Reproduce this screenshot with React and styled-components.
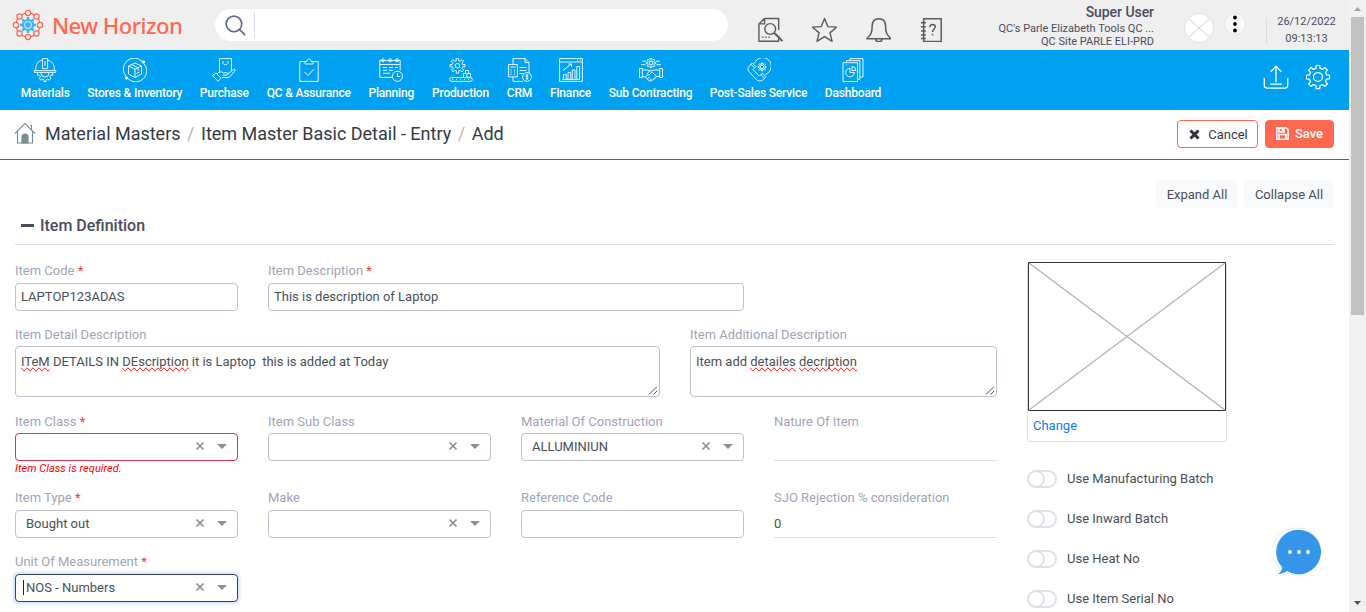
import React from "react";
import styled, { createGlobalStyle, css } from "styled-components";

const Global = createGlobalStyle`
  *, *::before { box-sizing: border-box; }
  html, body { margin: 0; height: 100%; overflow: hidden; background: #fff; }
  body { font-family: Roboto, "Liberation Sans", sans-serif; font-size: 13px; color: #495057; }
  button { font-family: inherit; }
`;

const Shell = styled.div`
  display: flex;
  width: 1366px;
  height: 612px;
  overflow: hidden;
`;
const Page = styled.div`
  width: 1349px;
  height: 612px;
  overflow: hidden;
  white-space: nowrap;
`;

/* Header */
const Header = styled.header`
  display: flex;
  align-items: flex-start;
  height: 50px;
  background: #efefef;
`;
const Brand = styled.div`
  display: flex;
  align-items: center;
  width: 215px;
  height: 50px;
  padding: 0 0 1px 12px;
  gap: 8px;
  color: #ff6850;
  font: 500 22px/30px "Noto Sans", sans-serif;
  letter-spacing: -0.48px;
`;
const SearchBox = styled.div`
  display: flex;
  align-items: center;
  width: 513px;
  height: 32px;
  margin-top: 9px;
  padding-left: 10px;
  border-radius: 16px;
  background: #fff;
`;
const SearchDivider = styled.span`
  width: 1px;
  height: 26px;
  margin-left: 8px;
  background: #dcdce6;
`;
const Shortcuts = styled.div`
  display: flex;
  width: 188px;
  margin: 16px 0 0 29px;
  justify-content: space-between;
`;
const UserInfo = styled.div`
  width: 180px;
  margin-left: 29px;
  padding-top: 4px;
  text-align: right;
  font-size: 11px;
  line-height: 13px;
  color: #4b4c5e;
`;
const UserName = styled.div`
  font-size: 14px;
  line-height: 17px;
  font-weight: 500;
  letter-spacing: -0.05px;
  margin-bottom: 1px;
`;
const Avatar = styled.div`
  width: 30px;
  height: 30px;
  margin: 13px 0 0 30px;
  border: 1px solid #e2e2e2;
  border-radius: 50%;
  background: #fff;
  overflow: hidden;
`;
const Kebab = styled.div`
  display: flex;
  justify-content: center;
  width: 22px;
  height: 22px;
  margin: 13px 0 0 10px;
  border: 1px solid #e4e4e4;
  border-radius: 50%;
  background: #f8f8f8;
`;
const Clock = styled.div`
  width: 80px;
  height: 26px;
  margin: 18px 0 0 20px;
  border-left: 1px solid #dcdce6;
`;
const ClockText = styled.div`
  margin-top: -5px;
  font-size: 11px;
  line-height: 17px;
  text-align: center;
  color: #4b4c5e;
`;

/* Navigation */
const Nav = styled.nav`
  display: flex;
  justify-content: space-between;
  height: 60px;
  padding: 8px 18px 0 12px;
  background: #00a1f1;
  color: #fff;
`;
const NavItems = styled.div`
  display: flex;
`;
const NavItem = styled.div`
  display: flex;
  flex-direction: column;
  align-items: center;
  width: ${(p) => p.$w}px;
  font-size: 12px;
  line-height: 14px;
  font-weight: 500;
  letter-spacing: -0.18px;
  gap: 4px;
`;
const NavTools = styled.div`
  display: flex;
  gap: 17px;
  padding-top: 7px;
`;

/* Breadcrumb */
const Bar = styled.div`
  display: flex;
  align-items: center;
  height: 50px;
  padding: 0 15px 2px 14px;
  border-bottom: 1px solid #5f6062;
`;
const HomeIcon = styled.svg`
  margin-bottom: 2px;
`;
const Crumbs = styled.div`
  display: flex;
  flex: 1;
  margin-left: 9px;
  font-size: 18px;
  letter-spacing: -0.01px;
  color: #343a46;
`;
const Slash = styled.span`
  width: 20.5px;
  text-align: center;
  color: #b6b6bb;
`;
const Button = styled.button`
  display: flex;
  align-items: center;
  justify-content: center;
  gap: ${(p) => (p.$primary ? 6 : 8)}px;
  height: 28px;
  padding: 0;
  margin: 0 0 0 7px;
  border: 1px solid #ff6850;
  border-radius: 4px;
  font-size: 13px;
  width: ${(p) => p.$w}px;
  ${(p) =>
    p.$primary
      ? css`background: #ff6850; color: #fff; font-weight: 500;`
      : css`background: #fff; color: #343a46; padding: 1px 0 0 2px;`}
`;
const PlainButton = styled(Button)`
  border: 0;
  margin: 0;
  padding: 0;
  background: #f8f9fb;
  color: #495057;
`;

/* Content */
const Actions = styled.div`
  display: flex;
  justify-content: flex-end;
  gap: 6px;
  padding: 20px 15px 0 0;
`;
const SectionTitle = styled.h2`
  display: flex;
  align-items: center;
  gap: 6px;
  height: 37px;
  margin: 0 15px 17px;
  padding: 0 0 2px 6px;
  border-bottom: 1px solid #dcdcdc;
  font-size: 16px;
  font-weight: 500;
  color: #4b4c5e;
`;
const Dash = styled.span`
  width: 13px;
  height: 3px;
  background: #4b4c5e;
`;
const Body = styled.div`
  display: flex;
  padding-left: 15px;
  gap: 30px;
`;
const Form = styled.div`
  width: 982px;
`;
const Row = styled.div`
  display: grid;
  grid-template-columns: ${(p) => p.$cols};
  column-gap: 30px;
  height: ${(p) => p.$h}px;
  align-items: start;
`;
const Field = styled.div`
  display: flex;
  flex-direction: column;
  min-width: 0;
`;
const Label = styled.label`
  height: 18px;
  margin-bottom: ${(p) => p.$gap}px;
  line-height: 18px;
  color: #a1a5b7;
`;
const Star = styled.span`
  color: #f33;
`;
const Control = styled.div`
  display: flex;
  align-items: center;
  height: ${(p) => p.$h || 28}px;
  padding-left: ${(p) => (p.$select ? 10 : 5)}px;
  padding-bottom: ${(p) => (p.$area ? 0 : 2)}px;
  border: 1px solid #bfbfd0;
  border-radius: 4px;
  background: #fff;
  ${(p) => p.$state === "error" && css`border-color: #dc3545;`}
  ${(p) => p.$state === "focus" && css`
    border-color: #3b4354;
    padding-left: 7px;
    box-shadow: 0 0 3px 2px #cfe4ff;
  `}
  ${(p) => p.$area && css`align-items: stretch; line-height: 30px; white-space: pre;`}
  ${(p) => p.$readonly && css`
    border: 0;
    border-bottom: 1px solid #dedfe6;
    border-radius: 0;
    padding-left: 0;
    padding-bottom: 0;
  `}
`;
const Value = styled.span`
  flex: 1;
`;
const Caret = styled.span`
  width: 1px;
  height: 15px;
  margin-right: 2px;
  background: #222;
`;
const SelectIcons = styled.svg`
  margin-right: 8px;
`;
const Grip = styled.svg`
  align-self: flex-end;
`;
const Misspelt = styled.span`
  text-decoration-line: spelling-error;
`;
const ErrorText = styled.div`
  height: 15px;
  font-size: 11px;
  line-height: 15px;
  font-style: italic;
  letter-spacing: 0.04px;
  color: #f00;
`;
const Side = styled.aside`
  width: 200px;
`;
const ImageCard = styled.div`
  height: 180px;
  border: 1px solid #dfdfe3;
  border-top: 0;
  border-radius: 4px;
`;
const Placeholder = styled.svg`
  display: block;
`;
const Change = styled.a`
  display: block;
  padding: 6px 0 0 5px;
  line-height: 18px;
  color: #0d7bff;
`;
const Toggles = styled.div`
  display: flex;
  flex-direction: column;
  gap: 22px;
  margin-top: 28px;
`;
const ToggleRow = styled.div`
  display: flex;
  align-items: flex-start;
  gap: 10px;
  height: 18px;
  line-height: 18px;
`;
const Toggle = styled.span`
  width: 30px;
  height: 18px;
  border: 2px solid #e0e0e8;
  border-radius: 9px;
  &::before {
    content: "";
    display: block;
    width: 18px;
    height: 18px;
    margin: -2px 0 0 -2px;
    border: 2px solid #e0e0e8;
    border-radius: 50%;
  }
`;
const Chat = styled.svg`
  position: fixed;
  left: 1273px;
  top: 527px;
`;

/* Scrollbar */
const ScrollTrack = styled.div`
  display: flex;
  flex-direction: column;
  align-items: center;
  width: 17px;
  background: #f1f1f1;
`;
const Thumb = styled.div`
  width: 13px;
  height: 298px;
  margin-bottom: auto;
  background: #c1c1c1;
`;

const cog = (cx, cy, r, R, n) => {
  const pts = [];
  const step = (Math.PI * 2) / n;
  for (let i = 0; i < n; i++) {
    const a = i * step - Math.PI / 2;
    [[-0.3, r], [-0.2, R], [0.2, R], [0.3, r]].forEach(([f, d]) =>
      pts.push(`${(cx + Math.cos(a + f * step) * d).toFixed(2)} ${(cy + Math.sin(a + f * step) * d).toFixed(2)}`)
    );
  }
  return `M${pts.join("L")}Z`;
};

const Icon = ({ size = 24, color = "currentColor", w = 1, children }) => (
  <svg width={size} height={size} viewBox="0 0 24 24" fill="none" stroke={color} strokeWidth={w} strokeLinejoin="round">
    {children}
  </svg>
);

const icons = {
  materials: (
    <>
      <path d="M9 2.2C5 3.3 2.7 6.5 2.7 11v1.5M15 2.2c4 1.1 6.3 4.3 6.3 8.8v1.5M9.4.6h5.2v10H9.4zM1.2 12.6h21.6v1.8H1.2zM12 3v5" />
      <path d="M8 15a4 4 0 0 0 8 0M4.6 15v2.3h2l.8 1.4-1.2 1.8 1.8 1.6 1.8-1 1 .3.3 2.1h2l.3-2.1 1.1-.4 1.8 1.1 1.7-1.6-1.1-1.8.7-1.4h2V15" />
    </>
  ),
  stores: (
    <>
      <path d="M3.2 18.6A11 11 0 0 1 19 3.3M20.8 5.4A11 11 0 0 1 5 20.7" />
      <path d="m12 5 6.5 3v8L12 19.5 5.5 16V8zM5.5 8l6.5 3.2L18.5 8M12 11.2v8.3M8.5 6.6l6.7 3.2v3M13.5 15.5l3-1.4" />
      <circle cx="20.4" cy="4" r="1.2" fill="currentColor" /><circle cx="3.5" cy="20" r="1.2" fill="currentColor" />
    </>
  ),
  purchase: (
    <>
      <path d="M7.5 14V.6h12V13M11 3v1.5c0 3 5 3 5 0V3" />
      <path d="M.6 17.5 4 15l5 5.3-3 3zM5 16c2-2.4 4.5-2.5 6.3-1.3h3.5c1.8 0 1.6 2.3 0 2.3h-4M15.8 16l5.7-4.5c1.4-.7 2.3.3 1.4 1.4l-5.7 6.5H10" />
    </>
  ),
  qc: (
    <path d="M8 3.6H2.8v19.8h18.4V3.6H16M8 6V3.5h2C10 0 14 0 14 3.5h2V6zM7.5 14l3.5 3.5 6-6.5" />
  ),
  planning: (
    <>
      <path d="M13 19.4H.8V2.5h20.4v10M.8 6.5h20.4M4 9.5h4m2 0h4m2 0h3M4 12.3h4m2 0h4M4 15.3h7" />
      <circle cx="4" cy="2.3" r="1.5" /><circle cx="11" cy="2.3" r="1.5" /><circle cx="18" cy="2.3" r="1.5" />
      <circle cx="18.4" cy="18.3" r="5.1" /><path d="M18.4 15v3.5h2.8" />
    </>
  ),
  production: (
    <>
      <path d={cog(8.5, 7.7, 5.2, 7.6, 8)} /><circle cx="8.5" cy="7.7" r="2.3" />
      <rect x=".7" y="19.6" width="22.6" height="3.8" rx="1.9" />
      <path d="M3 21.5h1m3 0h1m3 0h1m3 0h1m3 0h1M14.5 19.5v-4h7v4M16.5 15.5v-3h3v3M18 16v3.5" />
    </>
  ),
  crm: (
    <>
      <path d="M5 6V.6h12l4 4V15M17 .6v4h4M5 19v4.4h10M11.5 9.5h7m-7 3h7m-7 3h4" />
      <path d="M.6 6.5h8.8v12.4H.6zM2.5 9h5M2.5 12h1.2m2.2 0h1.2M2.5 14h1.2m2.2 0h1.2M2.5 16.3h1.2m2.2 0h1.2" />
      <circle cx="19" cy="19" r="4.4" /><path d="M20.4 17.3c-3-1.2-3.2 1-1.4 1.6 2 .6 1.5 2.6-1.4 1.7M19 16v6" />
    </>
  ),
  finance: (
    <path d="M.6.6h22.8v22.8H.6zM.6 4h22.8M18 2.3h1m2 0h1M3 21.4h18M4.5 21v-4.5h2.7V21M9 21v-6.5h2.7V21M13.3 21v-9H16v9M17.8 21V8.5h2.8V21M4 12.5l8-6.3M9.5 6h3v3" />
  ),
  sub: (
    <>
      <path d={cog(12, 5, 3.3, 4.8, 8)} /><circle cx="12" cy="5" r="1.8" />
      <path d="M7 3.2H3.5m3 3.5H2M17 3.2h4M17.5 6.7H22" />
      <path d="M.5 10.5h2.8v9H.5zM20.7 10.5h2.8v9h-2.8zM3.3 12h5l3.7 1 3-1h5.7M3.3 18.5h2l5 4.3c1 .8 2 .3 2-.7 1.3.7 2.3-.2 2-1.2 1.4.4 2-.5 1.6-1.4 1.4 0 1.7-1 1-2l-4-3.5-2.5 2.7c-1.3 1-2.6-.4-1.8-1.5l2.4-2.7M17 18.5h3.7M6.5 19l1.8-2m.2 4 2-2.3m.2 4 1.8-2" />
    </>
  ),
  post: (
    <>
      <path d="M7.5 5.5A8.6 8.6 0 1 1 18.5 16.3" />
      <path d={cog(15, 9, 2.8, 4, 8)} /><circle cx="15" cy="9" r="1.7" />
      <path d="M2 8.2 5.3 5l3.6 3.6-3 3 6.5 6.5 3-3 3.5 3.5-3.2 3.6c-2 1.2-4.6 1-6.4-.7L2.5 14.2C.4 12.3.8 9.8 2 8.2zM4 6.3l3.6 3.6M13.9 16.6l3.6 3.6" />
    </>
  ),
  dashboard: (
    <>
      <path d="M2 4.7h14.5v18.8H2zM5.5 4.5V2.6h13.3v18.7h-2M9 2.4V.6h13v18.5h-3M5 7h1" />
      <path d="M9 10.2a4.3 4.3 0 1 0 4.3 4.3H9zM11 8.5a4 4 0 0 1 4 4h-4z" />
    </>
  ),
};

const navData = [
  ["materials", "Materials", 66.5], ["stores", "Stores & Inventory", 112.5], ["purchase", "Purchase", 66.5],
  ["qc", "QC & Assurance", 102.5], ["planning", "Planning", 62.5], ["production", "Production", 76],
  ["crm", "CRM", 42], ["finance", "Finance", 60], ["sub", "Sub Contracting", 100],
  ["post", "Post-Sales Service", 116], ["dashboard", "Dashboard", 73],
];

const Logo = () => (
  <svg width="32" height="32" viewBox="0 0 32 32" fill="none" stroke="#ff6850" strokeWidth="1.2">
    <circle cx="16" cy="16" r="12" strokeDasharray="4 5.42" strokeDashoffset="-2.7" />
    {[0, 1, 2, 3, 4, 5, 6, 7].map((i) => (
      <circle key={i} cx={16 + 12 * Math.cos((i * Math.PI) / 4)} cy={16 + 12 * Math.sin((i * Math.PI) / 4)} r="2.7" />
    ))}
    <path d={cog(16, 16, 6, 8, 8)} fill="#3fb2f2" stroke="none" />
    <circle cx="16" cy="16" r="3.4" stroke="#bfe4f7" fill="#3fb2f2" />
  </svg>
);

const LabelText = ({ text, required, gap = 3 }) => (
  <Label $gap={gap}>{text}{required && <Star> *</Star>}</Label>
);
const TextField = ({ label, required, value, gap, readonly }) => (
  <Field>
    <LabelText text={label} required={required} gap={gap} />
    <Control $readonly={readonly}>{value}</Control>
  </Field>
);
const SelectField = ({ label, required, value, gap, state, error }) => (
  <Field>
    <LabelText text={label} required={required} gap={gap} />
    <Control $select $state={state}>
      {state === "focus" && <Caret />}
      <Value>{value}</Value>
      <SelectIcons width="34" height="10" viewBox="0 0 34 10">
        <path d="M1.5 1.5l7 7m0-7l-7 7" stroke="#8f8f8f" strokeWidth="1.7" />
        <path d="M22 3h10l-5 5z" fill="#8f8f8f" />
      </SelectIcons>
    </Control>
    {error && <ErrorText>{error}</ErrorText>}
  </Field>
);
const AreaField = ({ label, children }) => (
  <Field>
    <LabelText text={label} gap={2} />
    <Control $area $h={51}>
      <Value>{children}</Value>
      <Grip width="11" height="11" viewBox="0 0 11 11" stroke="#555"><path d="M1 9.5 9 1.5M5.5 9.5l3.5-3.5" /></Grip>
    </Control>
  </Field>
);

const four = "repeat(4, 223px)";

export default function App() {
  return (
    <Shell>
      <Global />
      <Page>
        <Header>
          <Brand><Logo />New Horizon</Brand>
          <SearchBox>
            <Icon size={21} color="#636b88" w={1.9}><circle cx="10.2" cy="10.2" r="8.9" /><path d="m16.5 16.5 6.5 6.5" /></Icon>
            <SearchDivider />
          </SearchBox>
          <Shortcuts>
            <Icon size={26} color="#5c5c5c" w={1.3}>
              <path d="M20 13V2.3H7L1.8 7.3V23.3H20v-4.5M7 2.3v5H1.8M4.5 19.5h1.5m1.5 0H9m1.5 0H12" /><circle cx="12.2" cy="12" r="5" /><path d="m16 15.7 7.5 7.5" strokeWidth="1.7" />
            </Icon>
            <Icon size={26} color="#5c5c5c" w={1.3}>
              <path d="m12.5 2.3 3.1 7.5 7.9.5-6 5.3 2 7.8-7-4.3-7 4.3 2-7.8-6-5.3 7.9-.5z" />
            </Icon>
            <Icon size={26} color="#5c5c5c" w={1.4}>
              <path d="M1.7 21C5.3 17.5 6.6 15.5 6.6 9.5c0-4.5 2.5-7 6.2-7s6.2 2.5 6.2 7c0 6 1.3 8 4.9 11.5zM9.8 21.5c.5 3 5.5 3 6 0" />
            </Icon>
            <Icon size={26} color="#5c5c5c" w={1.4}>
              <path d="M4.3 2.5h16.2v21H4.3zM1.8 6.3h4.5M1.8 10h4.5M1.8 13.8h4.5M1.8 17.5h4.5M1.8 20.8h4.5M10 10.3c0-3.5 5-3 5-.3 0 2-2.5 2-2.5 4.8M12.5 16.3v1.8" />
            </Icon>
          </Shortcuts>
          <UserInfo>
            <UserName>Super User</UserName>
            <div>QC's Parle Elizabeth Tools QC ...</div>
            <div>QC Site PARLE ELI-PRD</div>
          </UserInfo>
          <Avatar>
            <svg width="28" height="28" stroke="#d2d2d2" fill="none"><path d="M4 5l20 18M24 5L4 23" /></svg>
          </Avatar>
          <Kebab>
            <svg width="6" height="20"><circle cx="3" cy="3.5" r="1.9" /><circle cx="3" cy="10" r="1.9" /><circle cx="3" cy="16.5" r="1.9" /></svg>
          </Kebab>
          <Clock><ClockText>26/12/2022<br />09:13:13</ClockText></Clock>
        </Header>
        <Nav>
          <NavItems>
            {navData.map(([k, t, w]) => (
              <NavItem key={k} $w={w}><Icon w={0.9}>{icons[k]}</Icon>{t}</NavItem>
            ))}
          </NavItems>
          <NavTools>
            <Icon size={26} w={1.2}><path d="M1.2 12v7c0 1.5.8 2.3 2.3 2.3h17c1.5 0 2.3-.8 2.3-2.3v-7M12 16V1.2M7 6.2l5-5 5 5M6.5 17.6h11" /></Icon>
            <Icon size={25} w={1.2}><path d={cog(11.5, 11.5, 8.5, 11.2, 8)} /><circle cx="11.5" cy="11.5" r="4.3" /></Icon>
          </NavTools>
        </Nav>
        <Bar>
          <HomeIcon width="22" height="22" viewBox="0 0 22 22" fill="none" stroke="#7b8d8e" strokeWidth="1.1">
            <path d="M1 11.5 11 1.5l10 10M3.5 9v12h15V9M16 3.5h1.5V8" />
            <path d="M8 21v-6c0-4 6-4 6 0v6z" fill="#7b8d8e" />
          </HomeIcon>
          <Crumbs>
            <span>Material Masters</span><Slash>/</Slash><span>Item Master Basic Detail - Entry</span><Slash>/</Slash><span>Add</span>
          </Crumbs>
          <Button $w={81}>
            <svg width="11" height="11" stroke="#2b303b" strokeWidth="3"><path d="M1.5 1.5l8 8m0-8l-8 8" /></svg>
            Cancel
          </Button>
          <Button $w={69} $primary>
            <svg width="13" height="13" viewBox="0 0 13 13" fill="none" stroke="#fff" strokeWidth="1.5">
              <path d="M.8.8h9.4l2 2v9.4H.8zM3 12V7.5h7V12" /><path d="M3 1h5v4H3z" /><path d="M6.5 1v3" />
            </svg>
            Save
          </Button>
        </Bar>
        <Actions>
          <PlainButton $w={82}>Expand All</PlainButton>
          <PlainButton $w={90}>Collapse All</PlainButton>
        </Actions>
        <SectionTitle><Dash />Item Definition</SectionTitle>
        <Body>
          <Form>
            <Row $cols="223px 476px" $h={64}>
              <TextField label="Item Code" required value="LAPTOP123ADAS" />
              <TextField label="Item Description" required value="This is description of Laptop" />
            </Row>
            <Row $cols="645px 307px" $h={87}>
              <AreaField label="Item Detail Description">
                <Misspelt>ITeM</Misspelt> DETAILS IN <Misspelt>DEscription</Misspelt>{" it is Laptop  this is added at Today"}
              </AreaField>
              <AreaField label="Item Additional Description">
                Item add <Misspelt>detailes</Misspelt> <Misspelt>decription</Misspelt>
              </AreaField>
            </Row>
            <Row $cols={four} $h={76}>
              <SelectField label="Item Class" required gap={2} state="error" error="Item Class is required." />
              <SelectField label="Item Sub Class" gap={2} />
              <SelectField label="Material Of Construction" gap={2} value="ALLUMINIUN" />
              <TextField label="Nature Of Item" gap={2} readonly />
            </Row>
            <Row $cols={four} $h={64}>
              <SelectField label="Item Type" required value="Bought out" />
              <SelectField label="Make" />
              <TextField label="Reference Code" />
              <TextField label="SJO Rejection % consideration" value="0" readonly />
            </Row>
            <Row $cols={four} $h={64}>
              <SelectField label="Unit Of Measurement" required value="NOS - Numbers" state="focus" />
            </Row>
          </Form>
          <Side>
            <ImageCard>
              <Placeholder width="198" height="149" fill="none">
                <path d="M1 1l196 147M197 1L1 148" stroke="#b5b5b5" strokeWidth="1.4" />
                <path d="M.5.5h197v148H.5z" stroke="#333" />
              </Placeholder>
              <Change>Change</Change>
            </ImageCard>
            <Toggles>
              {["Use Manufacturing Batch", "Use Inward Batch", "Use Heat No", "Use Item Serial No"].map((t) => (
                <ToggleRow key={t}><Toggle />{t}</ToggleRow>
              ))}
            </Toggles>
          </Side>
        </Body>
      </Page>
      <ScrollTrack>
        <svg width="17" height="17"><path d="M5 11h7L8.5 7z" fill="#a3a3a3" /></svg>
        <Thumb />
        <svg width="17" height="17"><path d="M5 6h7l-3.5 4z" fill="#505050" /></svg>
      </ScrollTrack>
      <Chat width="51" height="51" viewBox="0 0 51 51">
        <path d="M26 1a23.5 23.5 0 1 1-11 45c-4 2.5-9 3.5-12.5 2.5-2-.8-1.5-2.5 0-3.3 2-1 3.5-2.5 4-4A23.5 23.5 0 0 1 26 1z" fill="#fff" stroke="#e3eefa" />
        <path d="M26 2.7a22.3 22.3 0 1 1-12 41.3c-3 2-6 2.8-9 3 2.5-2 4.5-4 4-7A22.3 22.3 0 0 1 26 2.7z" fill="#3596e9" />
        <g fill="#fff"><circle cx="17" cy="25" r="2" /><circle cx="26" cy="25" r="2" /><circle cx="35" cy="25" r="2" /></g>
      </Chat>
    </Shell>
  );
}
